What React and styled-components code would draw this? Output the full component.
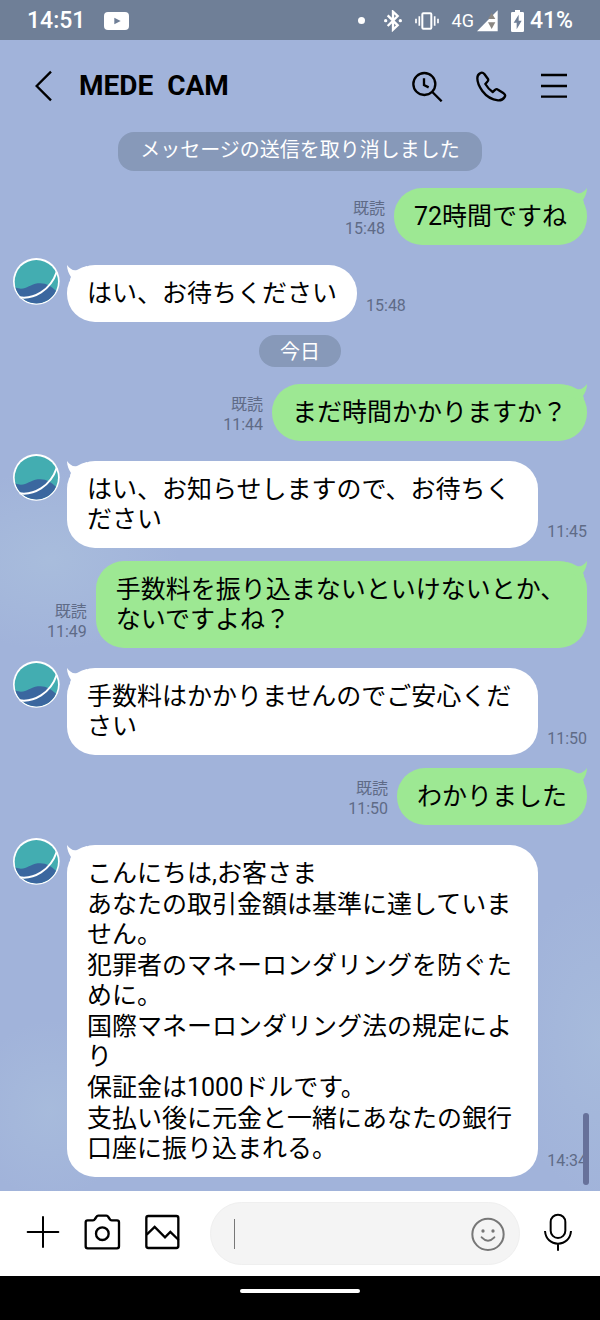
import React from 'react'
import styled, { createGlobalStyle } from 'styled-components'

const GlobalStyle = createGlobalStyle`
  * {
    box-sizing: border-box;
  }
  body {
    margin: 0;
    font-family: Roboto, "Noto Sans CJK JP", sans-serif;
    color: #000;
  }
  button {
    display: flex;
    padding: 0;
    border: 0;
    background: none;
    color: inherit;
    cursor: pointer;
  }
  svg {
    display: block;
    flex: none;
  }
`

const Screen = styled.div`
  display: flex;
  flex-direction: column;
  min-height: 100vh;
  background:
    radial-gradient(ellipse 130px 90px at 50px 560px, rgba(174, 196, 222, .55), transparent),
    radial-gradient(ellipse 80px 90px at 50px 1110px, rgba(174, 196, 222, .45), transparent),
    radial-gradient(ellipse 90px 160px at 100% 1040px, rgba(174, 196, 222, .45), transparent),
    #a1b3da;
`

const StatusBar = styled.div`
  display: flex;
  align-items: center;
  justify-content: space-between;
  height: 40px;
  padding: 1px 27px 0 27px;
  background: #6f7f97;
  color: #fff;
  font-size: 23px;
  font-weight: 500;
`

const StatusGroup = styled.div`
  display: flex;
  align-items: center;
  gap: ${({ $gap }) => $gap}px;
`

const Network = styled.span`
  font-size: 18px;
  font-weight: 400;
`

const Header = styled.header`
  display: flex;
  align-items: center;
  padding: 29px 32px 29px 34px;

  h1 {
    flex: 1;
    margin: 0 0 0 26px;
    font-size: 28px;
    line-height: 34px;
    font-weight: 700;
    white-space: pre;
  }
`

const HeaderActions = styled.div`
  display: flex;
  align-items: center;
  gap: 33px;
`

const Chat = styled.main`
  position: relative;
  flex: 1;
`

const MessageList = styled.ul`
  display: flex;
  flex-direction: column;
  gap: 13px;
  margin: 0;
  padding: 0 13px 14px;
  list-style: none;
`

const Notice = styled.li`
  align-self: center;
  margin-bottom: 4px;
  padding: ${({ $tall }) => ($tall ? '3px 22px 6px' : '2px 21px 0')};
  border-radius: 16px;
  background: #8799b9;
  color: #fff;
  font-size: 20px;
  line-height: 30px;
`

const Row = styled.li`
  display: flex;
  align-items: flex-end;
  gap: 9px;
  justify-content: ${({ $sent }) => ($sent ? 'flex-end' : 'flex-start')};
  padding-left: ${({ $sent }) => ($sent ? 34 : 0)}px;
`

const Avatar = styled.span`
  flex: none;
  align-self: flex-start;
  margin-right: -2px;
`

const Bubble = styled.div`
  position: relative;
  display: flex;
  flex-direction: column;
  gap: 1px;
  margin-top: ${({ $sent }) => ($sent ? 0 : 7)}px;
  padding: 14px 20px 13px;
  border-radius: 28px;
  background: ${({ $sent }) => ($sent ? '#9de893' : '#fff')};
  font-size: 25px;
  line-height: 30px;

  p {
    margin: 0;
  }
`

const Tail = styled.svg`
  position: absolute;
  top: 0;
  ${({ $sent }) => ($sent ? 'right: 0; transform: scaleX(-1);' : 'left: 0;')}
  fill: ${({ $sent }) => ($sent ? '#9de893' : '#fff')};
`

const Meta = styled.div`
  flex: none;
  margin-bottom: 6px;
  color: #5f6b87;
  font-size: 16px;
  line-height: 20px;
  text-align: right;
  white-space: nowrap;

  span, time {
    display: block;
  }
`

const ScrollThumb = styled.div`
  position: absolute;
  right: 11px;
  bottom: 6px;
  width: 6px;
  height: 72px;
  border-radius: 3px;
  background: #67719a;
`

const Composer = styled.form`
  display: flex;
  align-items: center;
  padding: 11px 28px 11px 26px;
  background: #fff;

  > button {
    padding-bottom: 3px;
  }
`

const Tools = styled.div`
  display: flex;
  align-items: center;
  gap: 24px;
  margin-right: 30px;
  padding-bottom: 3px;
`

const Field = styled.label`
  display: flex;
  align-items: center;
  flex: 1;
  min-width: 0;
  height: 63px;
  margin-right: 24px;
  padding: 0 14px 0 23px;
  border: 1px solid #efefef;
  border-radius: 32px;
  background: #f4f4f4;
  color: #777;

  input {
    flex: 1;
    min-width: 0;
    padding: 0 8px;
    border: 0;
    outline: 0;
    background: none;
    font: 25px Roboto, "Noto Sans CJK JP", sans-serif;
  }
`

const Caret = styled.span`
  width: 1px;
  height: 30px;
  background: #777;
`

const NavBar = styled.div`
  display: flex;
  justify-content: center;
  height: 44px;
  padding-top: 13px;
  background: #000;
`

const HomeHandle = styled.div`
  width: 20%;
  height: 4px;
  border-radius: 2px;
  background: #fff;
`

const Line = ({ children, ...props }) => (
  <svg fill="none" stroke="currentColor" aria-hidden="true" {...props}>
    {children}
  </svg>
)

const YoutubeIcon = () => (
  <svg width="25" height="18" viewBox="0 0 75 54" aria-hidden="true">
    <rect width="75" height="54" rx="12" fill="#fff" />
    <path d="M31 17v20l19-10z" fill="#6f7f97" />
  </svg>
)

const DotIcon = () => (
  <svg width="7" height="7" viewBox="0 0 7 7" aria-hidden="true">
    <circle cx="3.5" cy="3.5" r="3.5" fill="#fff" />
  </svg>
)

const BluetoothIcon = () => (
  <Line width="18" height="22" viewBox="257 28 54 66" strokeWidth="7">
    <path d="M268 44l30 30-14 13V33l14 13-30 30" />
    <circle cx="262" cy="60" r="5" fill="currentColor" stroke="none" />
    <circle cx="306" cy="60" r="5" fill="currentColor" stroke="none" />
  </Line>
)

const VibrateIcon = () => (
  <Line width="24" height="18" viewBox="351 33 72 54" strokeWidth="5">
    <rect x="373" y="37" width="27" height="46" rx="3" strokeWidth="6" />
    <path d="M364 46v28M354 53v14M410 46v28M420 53v14" />
  </Line>
)

const SignalIcon = () => (
  <svg width="21" height="22" viewBox="532 27 63 66" aria-hidden="true">
    <path d="M532 91h62V28z" fill="#fff" />
    <path d="M576 36l-11 18h22zM565 64h22l-11 20z" fill="#8b8782" />
  </svg>
)

const BatteryIcon = () => (
  <svg width="13" height="22" viewBox="630 27 39 66" aria-hidden="true">
    <path d="M642 27h15v6h8q4 0 4 4v52q0 4-4 4h-31q-4 0-4-4V37q0-4 4-4h8z" fill="#fff" />
    <path d="M653 41l-15 24h9v20l15-26h-9z" fill="#6f7f97" />
  </svg>
)

const BackIcon = () => (
  <Line width="19" height="32" viewBox="102 207 57 96" strokeWidth="7">
    <path d="M153 212l-43 43 43 43" />
  </Line>
)

const SearchIcon = () => (
  <Line width="31" height="31" viewBox="335 208 93 93" strokeWidth="7">
    <circle cx="372" cy="247" r="33" />
    <path d="M396 271l28 28M371 230v20l14 7" />
  </Line>
)

const PhoneIcon = () => (
  <Line width="31" height="31" viewBox="524 208 93 93" strokeWidth="7" strokeLinejoin="round">
    <path d="M536 215Q543 210 549 217L560 232Q562 237 558 240L552 247Q561 262 574 271L582 264Q586 261 590 264L607 275Q614 280 610 286Q603 297 590 296C570 294 552 280 543 268C532 253 528 240 528 230Q528 219 536 215Z" />
  </Line>
)

const MenuIcon = () => (
  <Line width="28" height="28" viewBox="718 213 84 84" strokeWidth="7">
    <path d="M721 222h78M721 255h78M721 287h78" />
  </Line>
)

const PlusIcon = () => (
  <Line width="34" height="34" viewBox="79 105 102 102" strokeWidth="6" strokeLinecap="round">
    <path d="M84 156h92M130 111v90" />
  </Line>
)

const CameraIcon = () => (
  <Line width="37" height="36" viewBox="245 101 111 108" strokeWidth="7" strokeLinejoin="round">
    <path d="M250 126q0-6 6-6h16q4 0 6-4l4-6q2-4 6-4h24q4 0 6 4l4 6q2 4 6 4h16q6 0 6 6v72q0 6-6 6h-88q-6 0-6-6z" />
    <circle cx="300" cy="160" r="19" />
  </Line>
)

const PictureIcon = () => (
  <Line width="35" height="36" viewBox="438 102 105 108" strokeWidth="7">
    <rect x="442" y="108" width="96" height="96" rx="6" />
    <path d="M443 164l24-23 31 31 16-16 25 24" />
  </Line>
)

const SmileIcon = () => (
  <Line width="34" height="34" viewBox="514 349 102 102" strokeWidth="6">
    <circle cx="565" cy="401" r="47" />
    <path d="M546 410q19 20 38 0" strokeLinecap="round" />
    <circle cx="550" cy="391" r="5" fill="currentColor" stroke="none" />
    <circle cx="580" cy="391" r="5" fill="currentColor" stroke="none" />
  </Line>
)

const MicIcon = () => (
  <Line width="28" height="38" viewBox="731 337 84 114" strokeWidth="6">
    <rect x="751" y="342" width="44" height="70" rx="22" />
    <path d="M734 391c2 24 18 38 39 38s37-14 39-38M773 429v21" />
  </Line>
)

const AvatarImage = () => (
  <svg width="47" height="47" viewBox="0 0 141 141" role="img" aria-label="MEDE CAM">
    <circle cx="70" cy="70" r="70" fill="#fff" />
    <circle cx="70" cy="71" r="65" fill="#43adb1" />
    <path d="M7 88C34 101 48 80 74 76C98 73 113 84 129 98A65 65 0 0 1 7 88Z" fill="#3b679f" />
    <path d="M20 118C62 124 112 98 131 42" fill="none" stroke="#fff" strokeWidth="6" />
  </svg>
)

const messages = [
  { notice: 'メッセージの送信を取り消しました', tall: true },
  { sent: true, time: '15:48', text: ['72時間ですね'] },
  { time: '15:48', text: ['はい、お待ちください'] },
  { notice: '今日' },
  { sent: true, time: '11:44', text: ['まだ時間かかりますか？'] },
  { time: '11:45', text: ['はい、お知らせしますので、お待ちください'] },
  { sent: true, time: '11:49', text: ['手数料を振り込まないといけないとか、ないですよね？'] },
  { time: '11:50', text: ['手数料はかかりませんのでご安心ください'] },
  { sent: true, time: '11:50', text: ['わかりました'] },
  {
    time: '14:34',
    text: [
      'こんにちは,お客さま',
      'あなたの取引金額は基準に達していません。',
      '犯罪者のマネーロンダリングを防ぐために。',
      '国際マネーロンダリング法の規定により',
      '保証金は1000ドルです。',
      '支払い後に元金と一緒にあなたの銀行口座に振り込まれる。',
    ],
  },
]

const Message = ({ sent, time, text }) => {
  const meta = (
    <Meta>
      {sent && <span>既読</span>}
      <time>{time}</time>
    </Meta>
  )

  return (
    <Row $sent={sent}>
      {sent ? meta : <Avatar><AvatarImage /></Avatar>}
      <Bubble $sent={sent}>
        <Tail $sent={sent} width="24" height="24" viewBox="0 0 24 24" aria-hidden="true">
          <path d="M0 0C3 4 6 6 10 5Q15 2 20 1V12L3 16Q3 13 4 12C2 9 0 5 0 0Z" />
        </Tail>
        {text.map((line) => <p key={line}>{line}</p>)}
      </Bubble>
      {!sent && meta}
    </Row>
  )
}

const App = () => {
  return (
    <>
      <GlobalStyle />
      <Screen lang="ja">
        <StatusBar>
          <StatusGroup $gap={19}>
            <span>14:51</span>
            <YoutubeIcon />
          </StatusGroup>
          <StatusGroup $gap={13}>
            <StatusGroup $gap={19}>
              <DotIcon />
              <BluetoothIcon />
            </StatusGroup>
            <VibrateIcon />
            <StatusGroup $gap={3}>
              <Network>4G</Network>
              <SignalIcon />
            </StatusGroup>
            <StatusGroup $gap={6}>
              <BatteryIcon />
              <span>41%</span>
            </StatusGroup>
          </StatusGroup>
        </StatusBar>

        <Header>
          <button type="button" aria-label="戻る"><BackIcon /></button>
          <h1>MEDE  CAM</h1>
          <HeaderActions>
            <button type="button" aria-label="検索"><SearchIcon /></button>
            <button type="button" aria-label="通話"><PhoneIcon /></button>
            <button type="button" aria-label="メニュー"><MenuIcon /></button>
          </HeaderActions>
        </Header>

        <Chat>
          <MessageList>
            {messages.map((item, i) => (
              item.notice
                ? <Notice key={i} $tall={item.tall}>{item.notice}</Notice>
                : <Message key={i} {...item} />
            ))}
          </MessageList>
          <ScrollThumb />
        </Chat>

        <Composer>
          <Tools>
            <button type="button" aria-label="追加"><PlusIcon /></button>
            <button type="button" aria-label="カメラ"><CameraIcon /></button>
            <button type="button" aria-label="写真"><PictureIcon /></button>
          </Tools>
          <Field>
            <Caret />
            <input type="text" aria-label="メッセージ" />
            <button type="button" aria-label="スタンプ"><SmileIcon /></button>
          </Field>
          <button type="button" aria-label="音声"><MicIcon /></button>
        </Composer>

        <NavBar>
          <HomeHandle />
        </NavBar>
      </Screen>
    </>
  )
}

export default App
